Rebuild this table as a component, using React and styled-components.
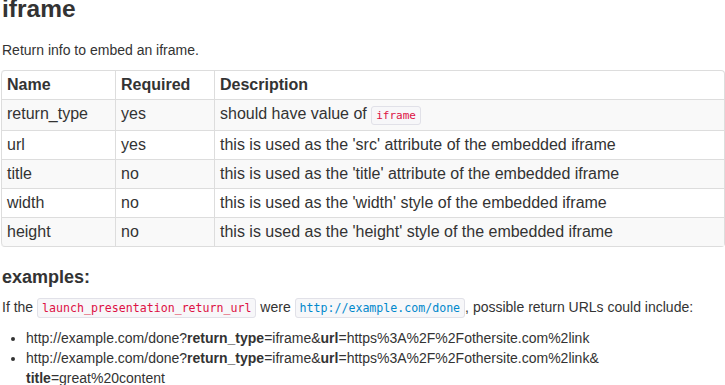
import React from 'react';
import styled, { createGlobalStyle, css } from 'styled-components';

const GlobalStyle = createGlobalStyle`
  html, body {
    margin: 0;
    padding: 0;
    background: #fff;
  }
  body {
    font-family: "Liberation Sans", Arial, Helvetica, sans-serif;
    font-size: 14px;
    line-height: 20px;
    color: #333;
  }
`;

const params = [
  { name: 'return_type', required: 'yes', description: ['should have value of ', { code: 'iframe' }] },
  { name: 'url', required: 'yes', description: ["this is used as the 'src' attribute of the embedded iframe"] },
  { name: 'title', required: 'no', description: ["this is used as the 'title' attribute of the embedded iframe"] },
  { name: 'width', required: 'no', description: ["this is used as the 'width' style of the embedded iframe"] },
  { name: 'height', required: 'no', description: ["this is used as the 'height' style of the embedded iframe"] },
];

const Page = styled.div`
  width: 724px;
  margin-left: 1px;
`;

const Title = styled.h3`
  margin: -5px 0 0 1px;
  font-size: 24.5px;
  line-height: 28px;
  font-weight: bold;
`;

const Lead = styled.p`
  margin: 17px 0 10px 1px;
`;

const sharedCell = css`
  box-sizing: border-box;
  padding: 5px;
  font-size: 16px;
  line-height: 18px;
  text-align: left;
  vertical-align: top;
  border-left: 1px solid #ddd;
  border-top: 1px solid #ddd;
`;

const ParamsTable = styled.table`
  width: 100%;
  border: 1px solid #ddd;
  border-left: 0;
  border-collapse: separate;
  border-spacing: 0;
  border-radius: 4px;
  table-layout: fixed;
`;

const HeadCell = styled.th`
  ${sharedCell}
  font-weight: bold;
  border-top: 0;
  width: ${({ $width }) => ($width ? `${$width}px` : 'auto')};

  &:first-child {
    border-top-left-radius: 4px;
  }
`;

const Row = styled.tr`
  background: ${({ $striped }) => ($striped ? '#f9f9f9' : '#fff')};

  &:last-child td:first-child {
    border-bottom-left-radius: 4px;
  }
`;

const Cell = styled.td`
  ${sharedCell}
`;

const Code = styled.code`
  font-family: "DejaVu Sans Mono", "Liberation Mono", monospace;
  font-size: ${({ $small }) => ($small ? '11px' : '11.6px')};
  padding: 2px 4px;
  color: ${({ $tone }) => ($tone === 'link' ? '#0088cc' : '#dd1144')};
  background: #f7f7f9;
  border: 1px solid #e1e1e8;
  border-radius: 3px;
`;

const SubTitle = styled.h4`
  margin: 20px 0 10px 1px;
  font-size: 18px;
  line-height: 20px;
  font-weight: bold;
`;

const Text = styled.p`
  margin: 0 0 10px 1px;
`;

const UrlList = styled.ul`
  margin: 0;
  padding-left: 25px;
`;

const UrlItem = styled.li`
  line-height: 20px;
`;

export default function App() {
  return (
    <>
      <GlobalStyle />
      <Page>
        <Title>iframe</Title>
        <Lead>Return info to embed an iframe.</Lead>
        <ParamsTable>
          <thead>
            <tr>
              <HeadCell $width={114}>Name</HeadCell>
              <HeadCell $width={99}>Required</HeadCell>
              <HeadCell>Description</HeadCell>
            </tr>
          </thead>
          <tbody>
            {params.map((p, i) => (
              <Row key={p.name} $striped={i % 2 === 0}>
                <Cell>{p.name}</Cell>
                <Cell>{p.required}</Cell>
                <Cell>
                  {p.description.map((part, j) =>
                    typeof part === 'string' ? (
                      <React.Fragment key={j}>{part}</React.Fragment>
                    ) : (
                      <Code key={j} $small>
                        {part.code}
                      </Code>
                    )
                  )}
                </Cell>
              </Row>
            ))}
          </tbody>
        </ParamsTable>
        <SubTitle>examples:</SubTitle>
        <Text>
          If the <Code>launch_presentation_return_url</Code> were{' '}
          <Code $tone="link">http://example.com/done</Code>, possible return URLs could include:
        </Text>
        <UrlList>
          <UrlItem>
            http://example.com/done?<b>return_type</b>=iframe&amp;<b>url</b>=https%3A%2F%2Fothersite.com%2link
          </UrlItem>
          <UrlItem>
            http://example.com/done?<b>return_type</b>=iframe&amp;<b>url</b>=https%3A%2F%2Fothersite.com%2link&amp;
            <wbr />
            <b>title</b>=great%20content
          </UrlItem>
        </UrlList>
      </Page>
    </>
  );
}
